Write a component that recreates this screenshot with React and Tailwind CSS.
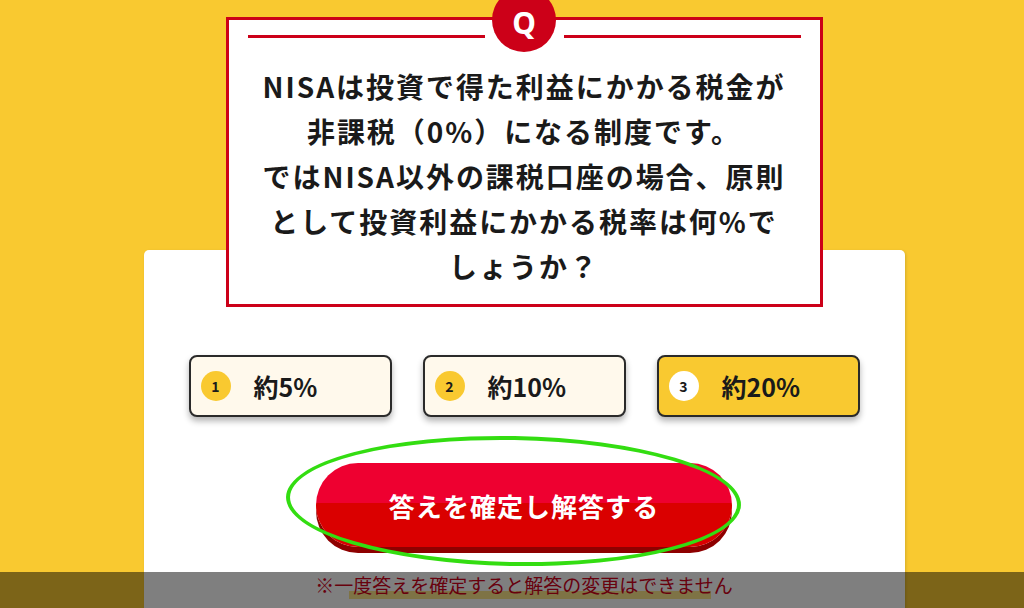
import React from 'react';

const jp = { fontFamily: '"Noto Sans CJK JP", "Noto Sans", sans-serif' };

const options = [
  { no: 1, label: '約5%' },
  { no: 2, label: '約10%' },
  { no: 3, label: '約20%', selected: true },
];

const Option = ({ no, label, selected }) => (
  <div
    className={`w-[203px] h-[62px] flex items-center rounded-[8px] border-2 border-[#2a2a2a] shadow-[0_4px_6px_rgba(0,0,0,0.3)] pl-[10px] ${
      selected ? 'bg-[#f9c930]' : 'bg-[#fff9ec]'
    }`}
  >
    <span
      className={`w-[30px] h-[30px] rounded-full flex items-center justify-center text-[14px] font-bold text-[#1a1a1a] ${
        selected ? 'bg-white' : 'bg-[#f9c930]'
      }`}
    >
      {no}
    </span>
    <span className="ml-[23px] text-[25px] font-bold text-[#1a1a1a] leading-none">{label}</span>
  </div>
);

export default function App() {
  return (
    <div className="relative w-full h-[608px] bg-[#f9c930] overflow-hidden" style={jp}>
      <div className="flex flex-col items-center pl-[24px]">
        {/* question box */}
        <div className="relative z-10 mt-[17px] w-[597px] border-[3px] border-[#cc0018] bg-white">
          <div className="absolute left-1/2 -translate-x-1/2 -top-[32px] w-[64px] h-[64px] rounded-full bg-[#cc0018] flex items-center justify-center pt-[6px]">
            <span className="text-white text-[30px] font-bold leading-none" style={{ fontFamily: '"Noto Sans", sans-serif' }}>
              Q
            </span>
          </div>
          <div className="flex items-center px-[19px] mt-[15px]">
            <div className="flex-1 h-[3px] bg-[#cc0018]" />
            <div className="w-[79px]" />
            <div className="flex-1 h-[3px] bg-[#cc0018]" />
          </div>
          <p className="mt-[26px] pb-[15px] text-center text-[28px] leading-[45px] font-bold tracking-[0.07em] text-[#1a1a1a]">
            NISAは投資で得た利益にかかる税金が
            <br />
            非課税（0%）になる制度です。
            <br />
            ではNISA以外の課税口座の場合、原則
            <br />
            として投資利益にかかる税率は何%で
            <br />
            しょうか？
          </p>
        </div>

        {/* white card */}
        <div className="-mt-[57px] w-[761px] h-[400px] bg-white rounded-[5px] shadow-[1px_1px_3px_rgba(0,0,0,0.15)] flex flex-col items-center pt-[105px]">
          <div className="flex gap-[31px]">
            {options.map((o) => (
              <Option key={o.no} {...o} />
            ))}
          </div>

          <div className="relative mt-[46px]">
            <button className="w-[416px] h-[84px] rounded-full overflow-hidden bg-[linear-gradient(#ee0030_0%,#ee0030_48%,#da0000_48%,#da0000_100%)] shadow-[0_6px_0_#8e0000] flex items-center justify-center">
              <span className="text-white text-[26px] font-bold tracking-[0.04em]">答えを確定し解答する</span>
            </button>
            <div className="absolute -left-[30px] -top-[27px] w-[455px] h-[130px] rounded-[50%] border-[4px] border-[#33dd11] rotate-[1deg] pointer-events-none" />
          </div>

          <div className="relative mt-[25px]">
            <span className="absolute left-[34px] right-[22px] bottom-[-1px] h-[8px] bg-[#fde68a]" />
            <p className="relative text-[19px] leading-[26px] text-[#d0021b]">※一度答えを確定すると解答の変更はできません</p>
          </div>
        </div>
      </div>

      {/* dim bar overlay */}
      <div className="absolute left-0 right-0 bottom-0 h-[36px] bg-black/50" />
    </div>
  );
}
